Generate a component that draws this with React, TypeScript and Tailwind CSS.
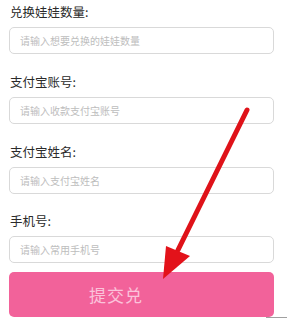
import React from "react";

const fields = [
  { label: "兑换娃娃数量:", ph: "请输入想要兑换的娃娃数量" },
  { label: "支付宝账号:", ph: "请输入收款支付宝账号" },
  { label: "支付宝姓名:", ph: "请输入支付宝姓名" },
  { label: "手机号:", ph: "请输入常用手机号" },
];

export default function App() {
  return (
    <div
      className="relative w-[291px] h-[328px] overflow-hidden bg-white"
      style={{ fontFamily: '"Noto Sans CJK SC", "Noto Sans", sans-serif' }}
    >
      <div className="flex flex-col pl-[9px] pr-[17px] pt-[4px]">
        {fields.map((f, i) => (
          <div key={i} className="flex flex-col">
            <div className="h-[16px] leading-[16px] text-[12.5px] text-[#2a2a2a] pl-[1px]">{f.label}</div>
            <div className="mt-[7px] h-[27px] rounded-[5px] border border-[#d9d9d9] bg-white flex items-center pl-[10px] text-[10px] text-[#bdbdbd]">
              {f.ph}
            </div>
            {i < 3 && <div className={i === 2 ? "h-[19px]" : "h-[20px]"} />}
          </div>
        ))}
        <div className="mt-[9px] h-[45px] rounded-[5px] bg-[#f2629a] flex items-center pl-[80px] text-[17px] text-[#fbc3da] tracking-[1px]">
          提交兑
        </div>
      </div>
      <svg className="absolute left-0 top-0" width="291" height="328" viewBox="0 0 291 328">
        <line x1="247" y1="110" x2="178" y2="250" stroke="#df1219" strokeWidth="5" strokeLinecap="round" />
        <polygon points="166,246 190,256 163,279" fill="#e3121a" />
        <line x1="266" y1="317.5" x2="287" y2="317.5" stroke="#a0a0a0" strokeWidth="1" />
      </svg>
    </div>
  );
}
